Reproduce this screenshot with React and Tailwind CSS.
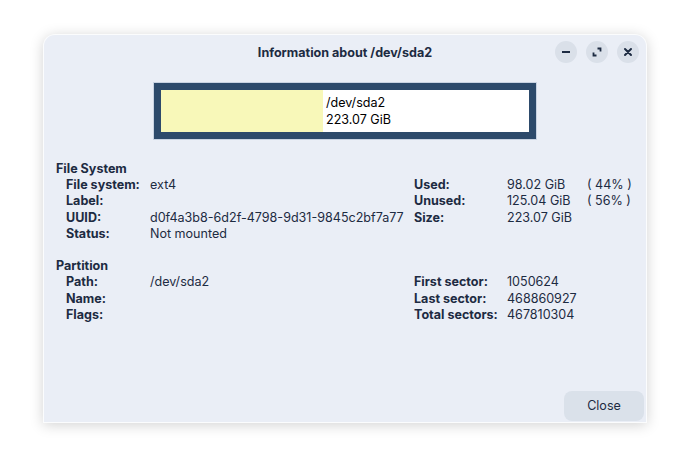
import React from 'react';

const fsRows = [
  ['File system:', 'ext4', 'Used:', '98.02 GiB', '( 44% )'],
  ['Label:', '', 'Unused:', '125.04 GiB', '( 56% )'],
  ['UUID:', 'd0f4a3b8-6d2f-4798-9d31-9845c2bf7a77', 'Size:', '223.07 GiB', ''],
  ['Status:', 'Not mounted', '', '', ''],
];

const partRows = [
  ['Path:', '/dev/sda2', 'First sector:', '1050624', ''],
  ['Name:', '', 'Last sector:', '468860927', ''],
  ['Flags:', '', 'Total sectors:', '467810304', ''],
];

function Section({ title, rows }) {
  return (
    <div className="pl-[12px]">
      <div className="font-bold h-[16.2px]">{title}</div>
      <div className="pl-[10px]">
        {rows.map((r, i) => (
          <div key={i} className="grid grid-cols-[84px_264px_93px_80px_auto] h-[16.2px]">
            <span className="font-bold">{r[0]}</span>
            <span>{r[1]}</span>
            <span className="font-bold">{r[2]}</span>
            <span>{r[3]}</span>
            <span className="whitespace-pre">{r[4]}</span>
          </div>
        ))}
      </div>
    </div>
  );
}

export default function App() {
  return (
    <div
      className="w-[690px] h-[476px] bg-white pt-[34px] pl-[43px] text-[12.55px] leading-[16.2px] text-[#1d2b42]"
      style={{ fontFamily: 'Inter, "Noto Sans", sans-serif' }}
    >
      <div className="relative w-[604px] h-[389px] rounded-t-[12px] bg-[#eaeef6] border border-white/80 shadow-[0_2px_14px_rgba(0,0,0,0.18)] flex flex-col">
        {/* title bar */}
        <div className="relative h-[36px] flex items-center justify-center">
          <span className="font-bold">Information about /dev/sda2</span>
          <div className="absolute right-[7px] top-[6px] flex gap-[9px]">
            <button className="w-[22px] h-[22px] rounded-full bg-[#dae0e9] flex items-center justify-center">
              <svg width="10" height="10" viewBox="0 0 10 10"><rect x="1" y="4" width="8" height="2" fill="#1d2b42" /></svg>
            </button>
            <button className="w-[22px] h-[22px] rounded-full bg-[#dae0e9] flex items-center justify-center">
              <svg width="10" height="10" viewBox="0 0 10 10" fill="none" stroke="#1d2b42" strokeWidth="1.8">
                <path d="M5.5 1.5h3v3M1.5 5.5v3h3" />
              </svg>
            </button>
            <button className="w-[22px] h-[22px] rounded-full bg-[#dae0e9] flex items-center justify-center">
              <svg width="10" height="10" viewBox="0 0 10 10" stroke="#1d2b42" strokeWidth="2" strokeLinecap="round">
                <path d="M2 2l6 6M8 2l-6 6" />
              </svg>
            </button>
          </div>
        </div>

        {/* disk graphic */}
        <div className="flex justify-center mt-[12px]">
          <div className="w-[382px] h-[56px] bg-[#2d4a6b] p-[7px] outline outline-1 outline-[#c9d3e2]">
            <div className="flex h-full bg-white">
              <div className="w-[162px] bg-[#f8f8b9]" />
              <div className="pl-[3px] pt-[4px] leading-[17px] text-black">
                <div>/dev/sda2</div>
                <div>223.07 GiB</div>
              </div>
            </div>
          </div>
        </div>

        <div className="mt-[22px]">
          <Section title="File System" rows={fsRows} />
          <div className="h-[16.2px]" />
          <Section title="Partition" rows={partRows} />
        </div>

        <div className="mt-auto flex justify-end pr-[2px] pb-[1px]">
          <button className="w-[80px] h-[30px] rounded-[8px] bg-[#dae1ea]">Close</button>
        </div>
      </div>
    </div>
  );
}
